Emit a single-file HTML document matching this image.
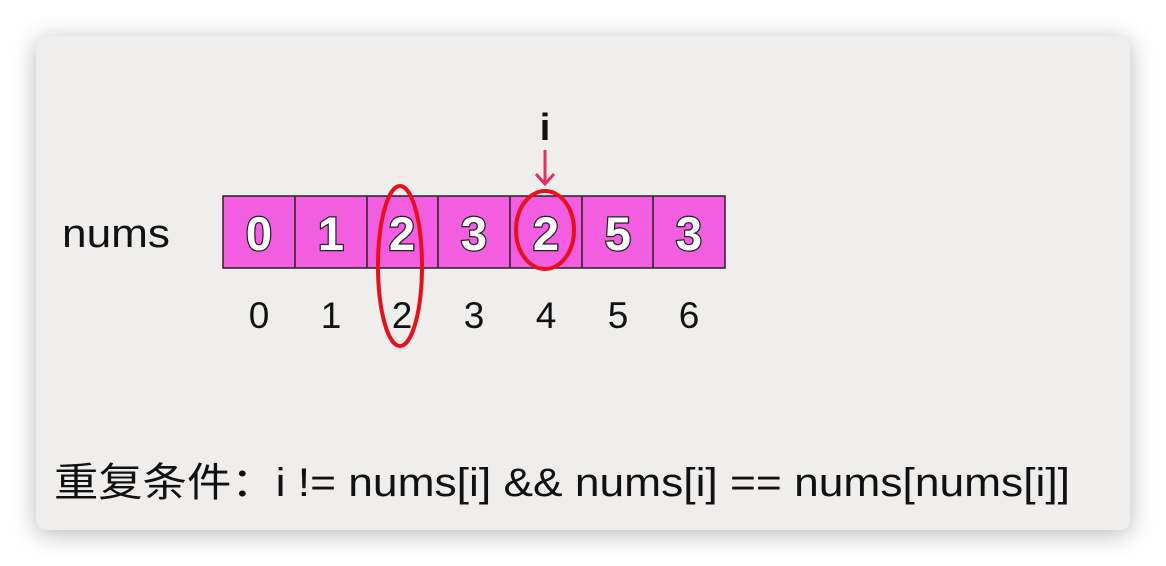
<!DOCTYPE html>
<html><head><meta charset="utf-8"><style>
body{margin:0;width:1166px;height:566px;background:#fff;position:relative;overflow:hidden;font-family:"Liberation Sans","Noto Sans CJK SC",sans-serif}
.card{position:absolute;left:36px;top:36px;width:1094px;height:494px;background:#efeeec;border-radius:10px;box-shadow:0 4px 24px rgba(0,0,0,.28)}
</style></head><body>
<div class="card"></div>
<svg width="1166" height="566" style="position:absolute;left:0;top:0">
<text x="62" y="247" font-size="40" fill="#111" font-family="Liberation Sans" textLength="108" lengthAdjust="spacingAndGlyphs">nums</text>
<g stroke="#222" stroke-width="1.5" fill="#f35ee0">
<rect x="223" y="196" width="502" height="72"/>
<line x1="295" y1="196" x2="295" y2="268"/><line x1="367" y1="196" x2="367" y2="268"/><line x1="438" y1="196" x2="438" y2="268"/><line x1="510" y1="196" x2="510" y2="268"/><line x1="582" y1="196" x2="582" y2="268"/><line x1="653" y1="196" x2="653" y2="268"/>
</g>
<g font-size="47" font-weight="bold" fill="#fff" stroke="#222" stroke-width="2.5" text-anchor="middle" font-family="Liberation Sans" paint-order="stroke">
<text x="259" y="250">0</text><text x="331" y="250">1</text><text x="402" y="250">2</text><text x="474" y="250">3</text><text x="546" y="250">2</text><text x="618" y="250">5</text><text x="689" y="250">3</text>
</g>
<g font-size="37" fill="#111" text-anchor="middle" font-family="Liberation Sans">
<text x="259" y="328">0</text><text x="331" y="328">1</text><text x="402" y="328">2</text><text x="474" y="328">3</text><text x="546" y="328">4</text><text x="618" y="328">5</text><text x="689" y="328">6</text>
</g>
<text x="545" y="140" font-size="38" font-weight="bold" text-anchor="middle" fill="#111">i</text>
<line x1="545" y1="150" x2="545" y2="183" stroke="#e0306a" stroke-width="3"/>
<path d="M536 174 L545 184 L554 174" fill="none" stroke="#e0306a" stroke-width="3"/>
<ellipse cx="400" cy="266" rx="22" ry="80" fill="none" stroke="#e8101a" stroke-width="4"/>
<ellipse cx="545" cy="230" rx="29" ry="39" fill="none" stroke="#e8101a" stroke-width="4"/>
<text x="54" y="496" font-size="40" fill="#111" font-family="Liberation Sans, Noto Sans CJK SC, sans-serif" textLength="1016" lengthAdjust="spacingAndGlyphs">重复条件：i != nums[i] &amp;&amp; nums[i] == nums[nums[i]]</text>
</svg>
</body></html>
